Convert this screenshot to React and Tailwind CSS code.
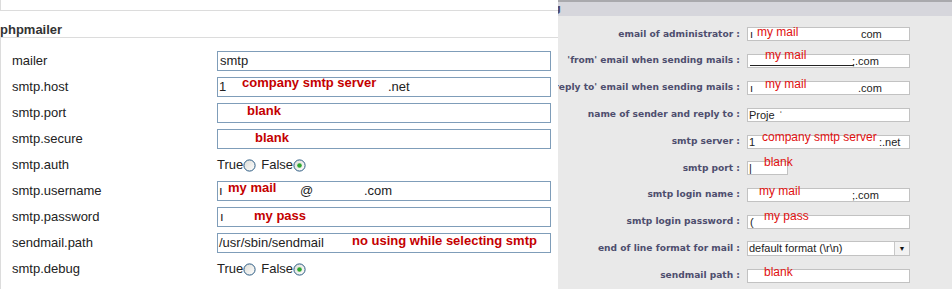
import React from "react";

const LEFT_ROWS = [
  { label: "mailer", text: [{ x: 2, t: "smtp" }] },
  {
    label: "smtp.host",
    text: [{ x: 1, t: "1" }, { x: 170, t: ".net" }],
    note: { x: 24, y: -2, t: "company smtp server" },
  },
  { label: "smtp.port", note: { x: 29, y: 0, t: "blank" } },
  { label: "smtp.secure", note: { x: 37, y: 1, t: "blank" } },
  { label: "smtp.auth", radio: true },
  {
    label: "smtp.username",
    text: [{ x: 1, t: "ı" }, { x: 82, t: "@" }, { x: 146, t: ".com" }],
    note: { x: 10, y: -1, t: "my mail" },
  },
  {
    label: "smtp.password",
    text: [{ x: 2, t: "ı" }],
    note: { x: 36, y: 1, t: "my pass" },
  },
  {
    label: "sendmail.path",
    text: [{ x: 1, t: "/usr/sbin/sendmail" }],
    note: { x: 134, y: 0, t: "no using while selecting smtp" },
  },
  { label: "smtp.debug", radio: true },
];

const RIGHT_ROWS = [
  { label: "email of administrator :", text: [{ x: 2, t: "ı" }, { x: 113, t: "com" }], note: { x: 9, y: -2, t: "my mail" } },
  { label: "'from' email when sending mails :", text: [{ x: 104, t: ";.com" }], line: true, note: { x: 17, y: -6, t: "my mail" } },
  { label: "reply to' email when sending mails :", text: [{ x: 2, t: "ı" }, { x: 110, t: ".com" }], note: { x: 17, y: -4, t: "my mail" } },
  { label: "name of sender and reply to :", text: [{ x: 1, t: "Proje" }, { x: 31, t: "ˈ" }] },
  { label: "smtp server :", text: [{ x: 1, t: "1" }, { x: 131, t: ":.net" }], note: { x: 14, y: -5, t: "company smtp server" } },
  { label: "smtp port :", small: true, text: [{ x: 1, t: "|" }], note: { x: 16, y: -6, t: "blank" } },
  { label: "smtp login name :", text: [{ x: 104, t: ";.com" }], note: { x: 11, y: -4, t: "my mail" } },
  { label: "smtp login password :", text: [{ x: 2, t: "(" }], note: { x: 16, y: -6, t: "my pass" } },
  { label: "end of line format for mail :", select: "default format (\\r\\n)" },
  { label: "sendmail path :", note: { x: 16, y: -4, t: "blank" } },
];

function Radio({ checked }) {
  return (
    <svg width="13" height="13" viewBox="0 0 13 13" className="inline-block">
      <defs>
        <linearGradient id="rg" x1="0" y1="0" x2="1" y2="1">
          <stop offset="0" stopColor="#dcdcd6" />
          <stop offset="1" stopColor="#ffffff" />
        </linearGradient>
      </defs>
      <circle cx="6.5" cy="6.5" r="5.6" fill="url(#rg)" stroke="#2a5a82" strokeWidth="1" />
      {checked && <circle cx="6.5" cy="6.5" r="2.3" fill="#2fa82f" />}
    </svg>
  );
}

export default function App() {
  return (
    <div className="flex w-[952px] h-[289px] overflow-hidden bg-white font-['Liberation_Sans',Arial,sans-serif]">
      {/* left: phpmailer settings */}
      <div className="w-[558px] shrink-0 flex flex-col">
        <div className="h-[11px] border-l border-b border-[#dcdcdc]" />
        <div className="h-[27px] border-b border-[#dcdcdc] flex items-end text-[13px] leading-[15px] font-bold text-[#333]">
          phpmailer
        </div>
        <div className="flex-1 border-l border-[#dcdcdc] pt-[10px]">
          {LEFT_ROWS.map((r) => (
            <div key={r.label} className="h-[26px] flex items-center text-[13px] text-[#222]">
              <div className="w-[216px] pl-[11px]">{r.label}</div>
              {r.radio ? (
                <div className="flex items-center">
                  True<Radio />
                  <span className="ml-[5px]">False</span>
                  <Radio checked />
                </div>
              ) : (
                <div className="relative w-[334px] h-[20px] border border-[#7f9db9] bg-white">
                  {(r.text || []).map((s, i) => (
                    <span key={i} className="absolute top-[1px] leading-[16px]" style={{ left: s.x }}>
                      {s.t}
                    </span>
                  ))}
                  {r.note && (
                    <span
                      className="absolute whitespace-nowrap font-bold text-[13px] leading-[13px] text-[#c40000]"
                      style={{ left: r.note.x, top: r.note.y }}
                    >
                      {r.note.t}
                    </span>
                  )}
                </div>
              )}
            </div>
          ))}
        </div>
      </div>

      {/* right: other mail configuration */}
      <div className="flex-1 flex flex-col bg-[#e9e9e9]">
        <div className="h-[2px] bg-[#a9a9ad]" />
        <div className="h-[17px] bg-[#d6d6dc] overflow-hidden flex items-center">
          <span className="-ml-[5px] text-[11px] font-bold text-[#4a4a6a] font-['DejaVu_Sans',Verdana,sans-serif]">g</span>
        </div>
        <div className="pt-[5px]">
          {RIGHT_ROWS.map((r) => (
            <div key={r.label} className="h-[26.8px] flex items-center">
              <div className="w-[182px] shrink-0 overflow-hidden flex justify-end whitespace-nowrap text-[9.1px] font-bold text-[#4e4e6e] font-['DejaVu_Sans',Verdana,sans-serif]">
                {r.label}
              </div>
              {r.select ? (
                <div className="ml-[7px] w-[163px] h-[15px] flex border border-[#c2c2c2] bg-white text-[11px] text-[#222]">
                  <div className="flex-1 pl-[1px] leading-[13px]">{r.select}</div>
                  <div className="w-[15px] border-l border-[#c8c8c8] bg-[#f2f2f2] flex items-center justify-center text-[7px] text-[#111]">
                    ▼
                  </div>
                </div>
              ) : (
                <div
                  className={
                    "relative ml-[7px] h-[14px] border border-[#c2c2c2] bg-white text-[11px] text-[#222] " +
                    (r.small ? "w-[41px]" : "w-[163px]")
                  }
                >
                  {r.line && <div className="absolute left-[2px] bottom-[1px] w-[104px] h-[1px] bg-[#222]" />}
                  {(r.text || []).map((s, i) => (
                    <span key={i} className="absolute top-0 leading-[12px]" style={{ left: s.x }}>
                      {s.t}
                    </span>
                  ))}
                  {r.note && (
                    <span
                      className="absolute whitespace-nowrap text-[12px] leading-[13px] text-[#e01010]"
                      style={{ left: r.note.x, top: r.note.y }}
                    >
                      {r.note.t}
                    </span>
                  )}
                </div>
              )}
            </div>
          ))}
        </div>
      </div>
    </div>
  );
}
